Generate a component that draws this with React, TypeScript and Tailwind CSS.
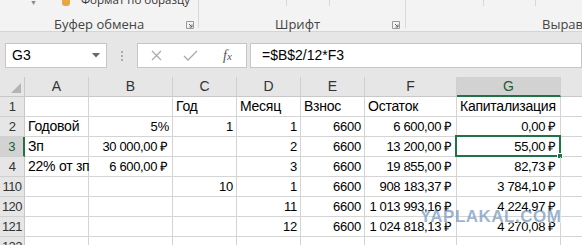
import { Fragment } from "react";

type Cell = { t: string; a?: "l" | "r" | "c" } | null;

const cols = [64, 84, 64, 64, 64, 92, 104];

const rows: { n: string; cells: Cell[]; sel?: boolean }[] = [
  {
    n: "1",
    cells: [
      null,
      null,
      { t: "Год", a: "l" },
      { t: "Месяц", a: "l" },
      { t: "Взнос", a: "l" },
      { t: "Остаток", a: "l" },
      { t: "Капитализация", a: "l" },
    ],
  },
  {
    n: "2",
    cells: [
      { t: "Годовой", a: "l" },
      { t: "5%" },
      { t: "1" },
      { t: "1" },
      { t: "6600" },
      { t: "6 600,00 ₽", a: "c" },
      { t: "0,00 ₽", a: "c" },
    ],
  },
  {
    n: "3",
    sel: true,
    cells: [
      { t: "Зп", a: "l" },
      { t: "30 000,00 ₽", a: "c" },
      null,
      { t: "2" },
      { t: "6600" },
      { t: "13 200,00 ₽", a: "c" },
      { t: "55,00 ₽", a: "c" },
    ],
  },
  {
    n: "4",
    cells: [
      { t: "22% от зп", a: "l" },
      { t: "6 600,00 ₽", a: "c" },
      null,
      { t: "3" },
      { t: "6600" },
      { t: "19 855,00 ₽", a: "c" },
      { t: "82,73 ₽", a: "c" },
    ],
  },
  {
    n: "110",
    cells: [
      null,
      null,
      { t: "10" },
      { t: "1" },
      { t: "6600" },
      { t: "908 183,37 ₽", a: "c" },
      { t: "3 784,10 ₽", a: "c" },
    ],
  },
  {
    n: "120",
    cells: [
      null,
      null,
      null,
      { t: "11" },
      { t: "6600" },
      { t: "1 013 993,16 ₽", a: "c" },
      { t: "4 224,97 ₽", a: "c" },
    ],
  },
  {
    n: "121",
    cells: [
      null,
      null,
      null,
      { t: "12" },
      { t: "6600" },
      { t: "1 024 818,13 ₽", a: "c" },
      { t: "4 270,08 ₽", a: "c" },
    ],
  },
  { n: "122", cells: [null, null, null, null, null, null, null] },
];

const Launcher = () => (
  <svg width="8" height="8" viewBox="0 0 8 8" className="shrink-0">
    <path d="M0.5 0.5h7v7h-7z" fill="none" stroke="#9a9a9a" />
    <path d="M3 3l3 3M6 3.5v2.5h-2.5" fill="none" stroke="#666" />
  </svg>
);

const App = () => {
  return (
    <div
      className="relative w-[582px] h-[245px] overflow-hidden bg-white text-black"
      style={{ fontFamily: '"Liberation Sans", Arial, sans-serif' }}
    >
      {/* Ribbon */}
      <div
        className="h-[32px] bg-[#f3f3f3] border-b border-[#d5d5d5] flex text-[13px] text-[#444]"
        style={{ fontFamily: '"Open Sans", "Noto Sans", sans-serif' }}
      >
        <div className="w-[199px] shrink-0 border-r border-[#d8d8d8] h-[28px] flex flex-col">
          <div className="h-[10px] shrink-0 flex items-end overflow-hidden whitespace-nowrap">
            <span className="ml-[30px] mb-[4px] text-[#888] text-[7px] leading-none">▼</span>
            <span className="ml-[25px] w-[8px] h-[6px] bg-[#e8a840] rounded-b-[3px] mb-[4px] shrink-0" />
            <span className="ml-[11px] text-[11.5px] leading-[14px] mb-[3px] text-[#333] shrink-0">
              Формат по образцу
            </span>
          </div>
          <div className="flex-1 flex items-center pt-[5px] pl-[54px] pr-[4px] whitespace-nowrap">
            <span className="flex-1">Буфер обмена</span>
            <Launcher />
          </div>
        </div>
        <div className="w-[207px] shrink-0 border-r border-[#d8d8d8] h-[28px] flex flex-col">
          <div className="h-[10px] shrink-0 relative">
            <span className="absolute left-[87px] top-0 h-[6px] w-px bg-[#d8d8d8]" />
            <span className="absolute left-[130px] top-0 h-[6px] w-px bg-[#d8d8d8]" />
          </div>
          <div className="flex-1 flex items-center pt-[5px] pl-[76px] pr-[5px]">
            <span className="flex-1">Шрифт</span>
            <Launcher />
          </div>
        </div>
        <div className="flex-1 h-[28px] flex flex-col">
          <div className="h-[10px] shrink-0 relative">
            <span className="absolute left-[77px] top-0 h-[6px] w-px bg-[#d8d8d8]" />
            <span className="absolute left-[129px] top-0 h-[6px] w-px bg-[#d8d8d8]" />
          </div>
          <div className="flex-1 flex items-center pt-[5px] pl-[136px] whitespace-nowrap">
            Выравнивание
          </div>
        </div>
      </div>

      {/* Formula bar */}
      <div className="h-[45px] bg-[#e6e6e6] pt-[11px]">
        <div className="flex h-[25px] items-stretch">
          <div className="ml-[5px] w-[102px] bg-white border border-[#c6c6c6] flex items-center pl-[6px] pr-[6px] text-[14px]">
            <span className="flex-1">G3</span>
            <svg width="8" height="5" viewBox="0 0 8 5">
              <path d="M0 0h8L4 4.5z" fill="#666" />
            </svg>
          </div>
          <div className="w-[30px] flex flex-col items-center justify-center gap-[2px]">
            <span className="w-[2px] h-[2px] bg-[#aaa]" />
            <span className="w-[2px] h-[2px] bg-[#aaa]" />
            <span className="w-[2px] h-[2px] bg-[#aaa]" />
          </div>
          <div className="w-[110px] bg-white border border-[#c6c6c6] flex items-center">
            <svg width="11" height="11" viewBox="0 0 11 11" className="ml-[13px]">
              <path d="M1 1l9 9M10 1l-9 9" stroke="#aaa" strokeWidth="1.2" />
            </svg>
            <svg width="15" height="11" viewBox="0 0 15 11" className="ml-[21px]">
              <path d="M1 6l4 4L14 1" fill="none" stroke="#aaa" strokeWidth="1.3" />
            </svg>
            <span
              className="ml-[25px] text-[14px] italic text-[#555]"
              style={{ fontFamily: '"Liberation Serif", serif' }}
            >
              f<span className="text-[11px]">x</span>
            </span>
          </div>
          <div className="ml-[3px] flex-1 bg-white border border-[#c6c6c6] flex items-center pl-[11px] text-[14px]">
            =$B$2/12*F3
          </div>
        </div>
      </div>

      {/* Sheet grid */}
      <div
        className="grid text-[14px]"
        style={{
          gridTemplateColumns: `25px ${cols.map((c) => c + "px").join(" ")} 1fr`,
          gridAutoRows: "20px",
        }}
      >
        {/* column header */}
        <div className="bg-[#e6e6e6] border-r border-b border-[#c8c8c8] flex items-end justify-end pr-[3px] pb-[3px]">
          <svg width="10" height="10" viewBox="0 0 10 10">
            <path d="M10 0v10H0z" fill="#b4b4b4" />
          </svg>
        </div>
        {["A", "B", "C", "D", "E", "F", "G", ""].map((l) => (
          <div
            key={l || "h"}
            className={`${
              l === "G"
                ? "bg-[#d2d2d2] border-b-2 border-b-[#217346] text-[#1e5c38]"
                : "bg-[#e6e6e6] border-b border-b-[#c8c8c8] text-[#333]"
            } ${l ? "border-r border-r-[#d0d0d0]" : ""} flex items-center justify-center text-[14px]`}
          >
            {l}
          </div>
        ))}

        {rows.map((r) => (
          <Fragment key={r.n}>
            <div
              className={`${
                r.sel
                  ? "bg-[#d2d2d2] border-r-2 border-r-[#217346] text-[#1e5c38]"
                  : "bg-[#e6e6e6] border-r border-r-[#c8c8c8] text-[#333]"
              } border-b border-b-[#d0d0d0] flex items-center justify-center text-[13px] tracking-[-0.5px]`}
            >
              {r.n}
            </div>
            {r.cells.map((c, i) => {
              const isSel = r.sel && i === 6;
              return (
                <div
                  key={i}
                  className={`relative border-r border-b border-[#d4d4d4] flex items-center whitespace-nowrap ${
                    !c || c.a === "l"
                      ? "justify-start pl-[3px] text-[14px] tracking-[-0.25px]"
                      : c.a === "c"
                      ? "justify-end pr-[4px] text-[13px] tracking-[-0.35px]"
                      : "justify-end pr-[3px] text-[13px] tracking-[-0.2px]"
                  }`}
                >
                  {c?.t}
                  {isSel && (
                    <div className="absolute -left-[2px] -top-[2px] -right-px -bottom-px border-2 border-[#217346]">
                      <span className="absolute -right-[4px] -bottom-[4px] w-[6px] h-[6px] bg-[#217346] border border-white" />
                    </div>
                  )}
                </div>
              );
            })}
            <div className="border-b border-[#d4d4d4]" />
          </Fragment>
        ))}
      </div>

      {/* watermark */}
      <div
        className="absolute left-[420px] top-[204px] text-[17px] font-bold tracking-[0.5px] text-[rgba(60,105,160,0.5)] pointer-events-none"
        style={{ textShadow: "1px 1px 0 rgba(255,255,255,0.6)" }}
      >
        YAPLAKAL.COM
      </div>
    </div>
  );
};

export default App;
